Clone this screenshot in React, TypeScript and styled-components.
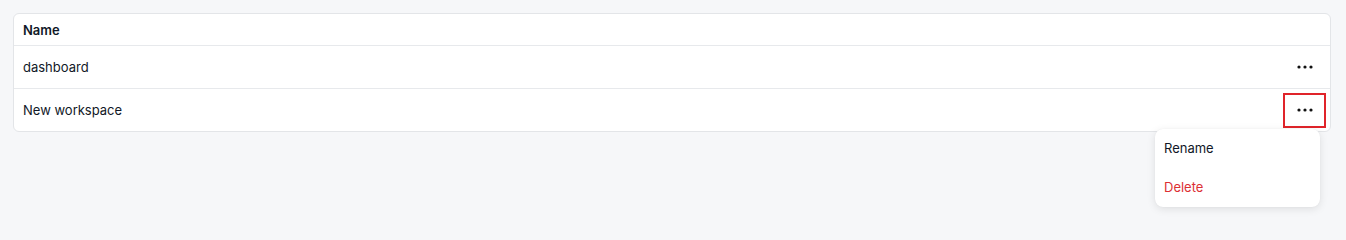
import React from "react";
import styled, { createGlobalStyle } from "styled-components";

const Global = createGlobalStyle`
  html, body { margin: 0; padding: 0; background: #f6f7f9; }
  body { font-family: Inter, "Noto Sans", sans-serif; color: #111827; }
`;

const Page = styled.div`
  padding: 13px 15px 13px 13px;
  position: relative;
  height: 240px;
  box-sizing: border-box;
`;

const Card = styled.div`
  background: #fff;
  border: 1px solid #e3e5e8;
  border-radius: 6px;
  overflow: visible;
  position: relative;
`;

const HeaderRow = styled.div`
  height: 31px;
  display: flex;
  align-items: center;
  padding: 0 9px;
  font-size: 13px;
  font-weight: 600;
  border-bottom: 1px solid #e7e9ec;
`;

const Row = styled.div<{ $last?: boolean }>`
  height: 42px;
  display: flex;
  align-items: center;
  justify-content: space-between;
  padding: 0 4px 0 9px;
  font-size: 13px;
  border-bottom: ${(p) => (p.$last ? "none" : "1px solid #e7e9ec")};
`;

const DotsButton = styled.button<{ $active?: boolean }>`
  width: 43px;
  height: 35px;
  box-sizing: border-box;
  display: flex;
  align-items: center;
  justify-content: center;
  background: transparent;
  border: 2px solid ${(p) => (p.$active ? "#e0242a" : "transparent")};
  padding: 0;
  cursor: pointer;
  position: relative;
`;

const Menu = styled.div`
  position: absolute;
  top: calc(100% + 3px);
  right: 4px;
  width: 165px;
  background: #fff;
  border-radius: 8px;
  box-shadow: 0 2px 8px rgba(0, 0, 0, 0.1), 0 0 1px rgba(0, 0, 0, 0.08);
  padding: 0;
  display: flex;
  flex-direction: column;
  z-index: 10;
  text-align: left;
`;

const MenuItem = styled.div<{ $danger?: boolean }>`
  height: 39px;
  display: flex;
  align-items: center;
  padding: 0 9px;
  font-size: 13px;
  font-family: Inter, "Noto Sans", sans-serif;
  color: ${(p) => (p.$danger ? "#dc2f34" : "#111827")};
`;

const Dots = () => (
  <svg width="16" height="4" viewBox="0 0 16 4">
    <circle cx="2" cy="2" r="1.6" fill="#111" />
    <circle cx="8" cy="2" r="1.6" fill="#111" />
    <circle cx="14" cy="2" r="1.6" fill="#111" />
  </svg>
);

export default function App() {
  return (
    <>
      <Global />
      <Page>
        <Card>
          <HeaderRow>Name</HeaderRow>
          <Row>
            dashboard
            <DotsButton>
              <Dots />
            </DotsButton>
          </Row>
          <Row $last>
            New workspace
            <DotsButton $active>
              <Dots />
              <Menu>
                <MenuItem>Rename</MenuItem>
                <MenuItem $danger>Delete</MenuItem>
              </Menu>
            </DotsButton>
          </Row>
        </Card>
      </Page>
    </>
  );
}
